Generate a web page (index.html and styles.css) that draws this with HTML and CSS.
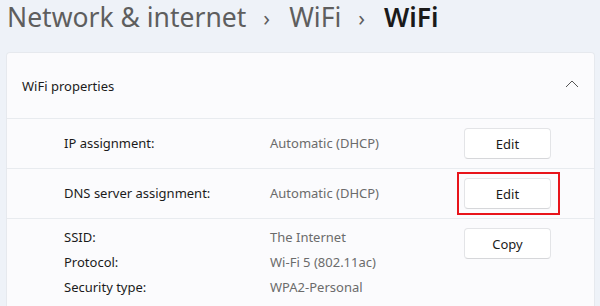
FILE: index.html
```html
<!DOCTYPE html>
<html>
<head>
<meta charset="utf-8">
<link rel="stylesheet" href="styles.css">
</head>
<body>
<div class="page">
  <h1 class="crumbs">
    <span class="crumb">Network &amp; internet</span>
    <span class="sep">&#x203A;</span>
    <span class="crumb">WiFi</span>
    <span class="sep">&#x203A;</span>
    <span class="crumb current">WiFi</span>
  </h1>
  <div class="card">
    <div class="card-head">
      <span class="head-title">WiFi properties</span>
      <svg class="chev" width="14" height="8" viewBox="0 0 14 8"><path d="M1 7 L7 1 L13 7" fill="none" stroke="#555" stroke-width="1"/></svg>
    </div>
    <div class="row">
      <div class="labels"><span>IP assignment:</span></div>
      <div class="values"><span>Automatic (DHCP)</span></div>
      <div class="action"><button class="btn">Edit</button></div>
    </div>
    <div class="row">
      <div class="labels"><span>DNS server assignment:</span></div>
      <div class="values"><span>Automatic (DHCP)</span></div>
      <div class="action"><div class="highlight"><button class="btn">Edit</button></div></div>
    </div>
    <div class="row multi">
      <div class="labels"><span>SSID:</span><span>Protocol:</span><span>Security type:</span></div>
      <div class="values"><span>The Internet</span><span>Wi-Fi 5 (802.11ac)</span><span>WPA2-Personal</span></div>
      <div class="action"><button class="btn">Copy</button></div>
    </div>
  </div>
</div>
</body>
</html>
```
FILE: styles.css
```css
html, body { margin: 0; padding: 0; }
body {
  background: #eef2f8;
  font-family: "Segoe UI", "Noto Sans", "Open Sans", sans-serif;
  width: 600px;
  height: 306px;
  overflow: hidden;
}
.page { padding: 0 5px 0 6px; }
.crumbs {
  margin: 0;
  height: 52px;
  box-sizing: border-box;
  padding-top: 2px;
  display: flex;
  align-items: flex-start;
  font-weight: 400;
  font-size: 26.5px;
  line-height: 30px;
  color: #5e5e5e;
}
.crumb { padding-left: 1px; }
.sep { font-size: 22px; margin: 0 18px 0 17px; color: #5e5e5e; }
.current { color: #1a1a1a; font-weight: 600; }
.card {
  background: #fbfbfd;
  border: 1px solid #e6e9ee;
  border-radius: 4px;
  border-bottom: none;
  height: 260px;
}
.card-head {
  height: 65px;
  display: flex;
  align-items: center;
  justify-content: space-between;
  padding: 0 15px 0 15px;
  border-bottom: 1px solid #e8ebef;
  font-size: 13px;
  color: #1b1b1b;
}
.chev { margin-top: -4px; }
.row {
  display: flex;
  align-items: center;
  height: 49px;
  border-bottom: 1px solid #e8ebef;
  font-size: 13px;
}
.row.multi { align-items: flex-start; border-bottom: none; padding-top: 9px; }
.labels, .values { display: flex; flex-direction: column; gap: 6px; }
.labels { width: 206px; padding-left: 57px; color: #1b1b1b; }
.values { width: 194px; color: #6b6b6b; }
.labels span, .values span { line-height: 19px; }
.action { width: 87px; }
.highlight {
  margin: -6px -9px -6px -7px;
  padding: 4px 7px 4px 5px;
  border: 2px solid #e8141b;
}
.btn {
  display: block;
  width: 87px;
  height: 31px;
  border: 1px solid #e3e4e7;
  border-bottom-color: #d6d7da;
  border-radius: 4px;
  background: #ffffff;
  font-family: inherit;
  font-size: 13px;
  color: #1b1b1b;
  padding: 0;
}
```
